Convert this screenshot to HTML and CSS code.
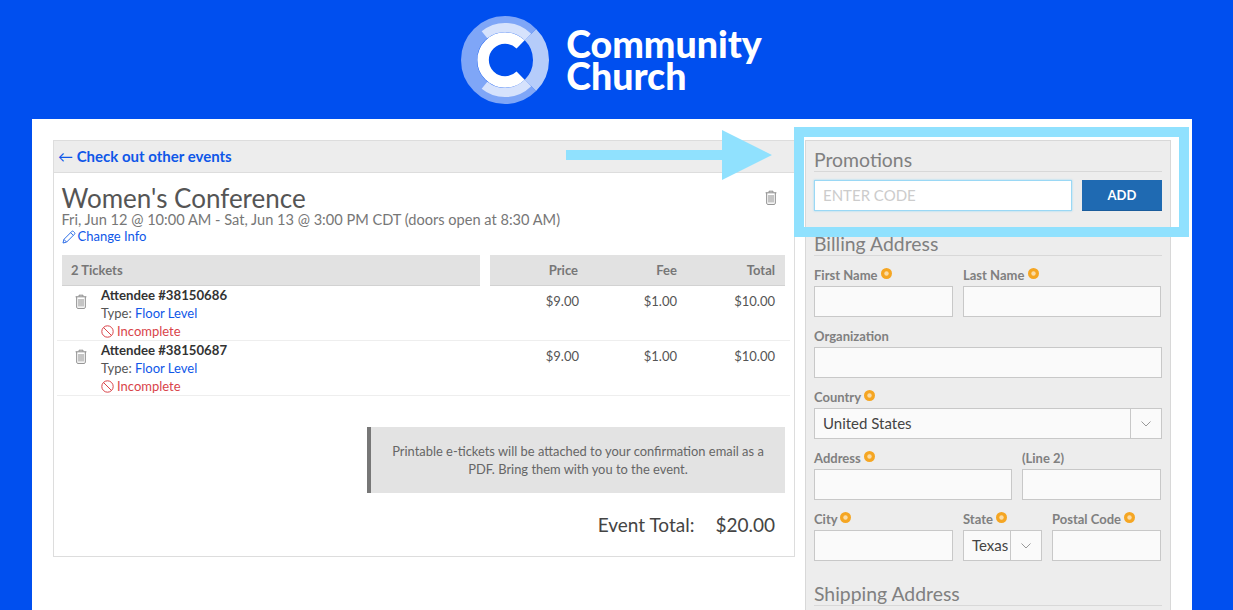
FILE: index.html
```html
<!DOCTYPE html>
<html lang="en">
<head>
    <meta charset="UTF-8">
    <title>Community Church - Checkout</title>
    <link rel="stylesheet" href="styles.css">
</head>
<body>
    <svg width="0" height="0" class="defs">
        <symbol id="trash" viewBox="0 0 12 15">
            <path d="M4 2.500V1.200h4v1.300M.6 2.800h10.800M1.700 2.800v10.400c0 .7.4 1.200 1 1.200h6.600c.6 0 1-.5 1-1.200V2.800M4 5v7.500M6 5v7.500M8 5v7.500" fill="none" stroke="#8a8a8a" stroke-width="1"/>
        </symbol>
        <symbol id="ban" viewBox="0 0 13 13">
            <circle cx="6.500" cy="6.500" r="5.700" fill="none" stroke="#d9444a" stroke-width="1"/>
            <path d="M2.500 2.500l8 8" stroke="#d9444a" stroke-width="1"/>
        </symbol>
        <symbol id="req" viewBox="0 0 11 11">
            <circle cx="5.500" cy="5.500" r="5.500" fill="#f5a623"/>
            <circle cx="5.500" cy="5.500" r="2.200" fill="#fbdca6"/>
        </symbol>
        <symbol id="chev" viewBox="0 0 10 6">
            <path d="M.5.500L5 5l4.500-4.500" fill="none" stroke="#999" stroke-width="1"/>
        </symbol>
    </svg>

    <header class="site-head">
        <svg class="logo" viewBox="-50 -50 100 100" width="100" height="100">
            <path d="M25.460 -25.460A36 36 0 1 0 25.460 25.460" fill="none" stroke="#7fa6f7" stroke-width="16"/>
            <path d="M25.460 -25.460A36 36 0 0 1 25.460 25.460" fill="none" stroke="#b5ccfa" stroke-width="16"/>
            <path d="M-20.500 -25.200A32.500 32.500 0 0 1 23 -23M-20.500 25.200A32.500 32.500 0 0 0 23 23" fill="none" stroke="#d6e2fc" stroke-width="9"/>
            <path d="M15.600 -15.600A22 22 0 1 0 15.600 15.600" fill="none" stroke="#fff" stroke-width="11.500"/>
        </svg>
        <div class="brand">Community<br>Church</div>
    </header>

    <div class="page">
        <main class="event-card">
            <div class="back-bar"><a href="#"><span class="arr">&larr;</span> Check out other events</a></div>
            <div class="event-info">
                <svg class="ico-trash info-trash"><use href="#trash"/></svg>
                <h1>Women's Conference</h1>
                <p class="when">Fri, Jun 12 @ 10:00 AM - Sat, Jun 13 @ 3:00 PM CDT (doors open at 8:30 AM)</p>
                <a class="change" href="#">
                    <svg width="14" height="14" viewBox="0 0 14 14"><path d="M1 13l.9-3.600L9.800 1.500a1.200 1.200 0 0 1 1.700 0l1 1a1.200 1.200 0 0 1 0 1.700L4.600 12.100zM1.900 9.400l2.700 2.700M8.600 2.700l2.700 2.700" fill="none" stroke="#2f6fe8" stroke-width="1"/></svg>
                    Change Info
                </a>
            </div>

            <div class="ticket-head">
                <div class="th-left">2 Tickets</div>
                <div class="th-right"><span>Price</span><span>Fee</span><span>Total</span></div>
            </div>
            <div class="ticket">
                <svg class="ico-trash"><use href="#trash"/></svg>
                <div class="who">
                    <strong>Attendee #38150686</strong>
                    <div>Type: <a href="#">Floor Level</a></div>
                    <div class="bad"><svg><use href="#ban"/></svg>Incomplete</div>
                </div>
                <span class="amt">$9.00</span><span class="amt">$1.00</span><span class="amt">$10.00</span>
            </div>
            <div class="ticket">
                <svg class="ico-trash"><use href="#trash"/></svg>
                <div class="who">
                    <strong>Attendee #38150687</strong>
                    <div>Type: <a href="#">Floor Level</a></div>
                    <div class="bad"><svg><use href="#ban"/></svg>Incomplete</div>
                </div>
                <span class="amt">$9.00</span><span class="amt">$1.00</span><span class="amt">$10.00</span>
            </div>

            <div class="notice">Printable e-tickets will be attached to your confirmation email as a PDF. Bring them with you to the event.</div>
            <div class="total"><span>Event Total:</span><span>$20.00</span></div>
        </main>

        <aside class="side">
            <h2>Promotions</h2>
            <div class="promo">
                <input class="code" type="text" placeholder="ENTER CODE">
                <button class="add">ADD</button>
            </div>

            <h2 class="billing">Billing Address</h2>
            <div class="row">
                <label class="w139"><span class="lbl">First Name <svg class="req"><use href="#req"/></svg></span><span class="box"></span></label>
                <label class="w198"><span class="lbl">Last Name <svg class="req"><use href="#req"/></svg></span><span class="box"></span></label>
            </div>
            <div class="row">
                <label class="wfull"><span class="lbl">Organization</span><span class="box"></span></label>
            </div>
            <div class="row">
                <label class="wfull"><span class="lbl">Country <svg class="req"><use href="#req"/></svg></span>
                    <span class="box sel"><span class="val">United States</span><span class="drop"><svg><use href="#chev"/></svg></span></span>
                </label>
            </div>
            <div class="row">
                <label class="w198"><span class="lbl">Address <svg class="req"><use href="#req"/></svg></span><span class="box"></span></label>
                <label class="w139"><span class="lbl">(Line 2)</span><span class="box"></span></label>
            </div>
            <div class="row">
                <label class="w139"><span class="lbl">City <svg class="req"><use href="#req"/></svg></span><span class="box"></span></label>
                <label class="w79"><span class="lbl">State <svg class="req"><use href="#req"/></svg></span>
                    <span class="box sel"><span class="val">Texas</span><span class="drop"><svg><use href="#chev"/></svg></span></span>
                </label>
                <label class="w109"><span class="lbl">Postal Code <svg class="req"><use href="#req"/></svg></span><span class="box"></span></label>
            </div>
            <h2 class="shipping">Shipping Address</h2>
        </aside>

        <!-- annotation drawn over the screenshot -->
        <svg class="arrow" width="206" height="50" viewBox="0 0 206 50"><path d="M0 20h156V0l50 25-50 25V30H0z" fill="#90e1fe"/></svg>
        <div class="callout"></div>
    </div>
</body>
</html>
```

FILE: styles.css
```css
* {
    box-sizing: border-box;
}

html, body {
    margin: 0;
    height: 610px;
    overflow: hidden;
}

body {
    background-color: #004fef;
    font-family: 'Lato', sans-serif;
    font-size: 13px;
    color: #555;
}

a {
    color: #0f57e8;
    text-decoration: none;
}

.defs {
    display: block;
    height: 0;
}

.site-head {
    height: 119px;
    display: flex;
    justify-content: center;
    align-items: center;
    gap: 11px;
    padding-right: 16px;
}

.logo {
    margin-top: 1px;
}

.brand {
    font-size: 37.5px;
    font-weight: 900;
    line-height: 32px;
    color: #fff;
    margin-top: 1px;
}

.page {
    position: relative;
    margin-left: 32px;
    width: 1160px;
    height: 491px;
    background: #fff;
    padding: 21px;
    display: flex;
    align-items: flex-start;
    gap: 10px;
}

/* left column */
.event-card {
    width: 742px;
    height: 417px;
    border: 1px solid #ddd;
}

.back-bar {
    height: 32px;
    background: #ededed;
    border-bottom: 1px solid #ddd;
    padding: 5px 4px;
    font-size: 15px;
    font-weight: 700;
    line-height: 20px;
}

.arr {
    font-weight: 400;
}

.event-info {
    position: relative;
    padding: 10px 7.5px 0;
    height: 82px;
}

.event-info h1 {
    margin: 0 0 -2px;
    font-size: 26px;
    font-weight: 400;
    line-height: 30px;
    color: #555;
}

.when {
    margin: 0;
    font-size: 14.6px;
    line-height: 17px;
    color: #777;
}

.change {
    display: flex;
    align-items: center;
    gap: 2px;
    font-size: 13px;
    line-height: 17px;
}

.ico-trash {
    width: 12px;
    height: 15px;
}

.info-trash {
    position: absolute;
    right: 17px;
    top: 17px;
}

.ticket-head {
    display: flex;
    gap: 10px;
    margin: 0 9px 0 8px;
    font-weight: 700;
    color: #777;
    line-height: 30px;
}

.th-left, .th-right {
    height: 31px;
    background: #e2e2e2;
    border-bottom: 1px solid #d2d2d2;
}

.th-left {
    width: 418px;
    padding-left: 9px;
}

.th-right {
    width: 295px;
    display: grid;
    grid-template-columns: 88px 99px 98px;
}

.th-right span {
    text-align: right;
}

.ticket {
    display: grid;
    grid-template-columns: 18px 398px 88px 98px 98px;
    margin: 0 4px 0 3px;
    padding-left: 18px;
    height: 55px;
    border-bottom: 1px solid #eee;
    line-height: 18px;
}

.ticket .ico-trash {
    margin-top: 8px;
}

.who {
    padding-left: 8px;
    color: #555;
}

.who strong {
    color: #333;
    font-size: 13.2px;
}

.bad {
    color: #d9444a;
    display: flex;
    align-items: center;
    gap: 3px;
}

.bad svg {
    width: 13px;
    height: 13px;
}

.amt {
    text-align: right;
    padding-top: 6px;
}

.notice {
    width: 418px;
    height: 66px;
    margin: 31px 9px 0 auto;
    padding: 15px 16px;
    background: #e3e3e3;
    border-left: 4px solid #777;
    text-align: center;
    line-height: 18px;
    font-size: 12.9px;
    color: #666;
}

.total {
    display: flex;
    justify-content: flex-end;
    gap: 21px;
    margin-top: 20px;
    padding-right: 19px;
    font-size: 19px;
    color: #444;
    line-height: 24px;
}

/* right column */
.side {
    width: 366px;
    height: 500px;
    background: #ededed;
    border: 1px solid #d8d8d8;
    padding: 8px 8px 0;
}

.side h2 {
    margin: 0;
    height: 23px;
    font-size: 19.4px;
    font-weight: 400;
    line-height: 22px;
    color: #808080;
    border-bottom: 1px solid #d8d8d8;
}

.promo {
    display: flex;
    gap: 10px;
    margin-top: 8px;
}

.code {
    width: 258px;
    height: 31px;
    border: 1px solid #9ad8f5;
    box-shadow: 0 0 2px #9ad8f5;
    background: #fff;
    padding: 0 8px 2px;
    font-family: 'Lato', sans-serif;
    font-size: 15px;
}

.code::placeholder {
    color: #ccc;
}

.add {
    width: 80px;
    height: 31px;
    background: #1f6ab2;
    border: 0;
    border-bottom: 1px solid #1a5c9c;
    color: #fff;
    font-family: 'Lato', sans-serif;
    font-size: 13px;
    font-weight: 700;
}

.side .billing {
    margin-top: 22px;
}

.row {
    display: flex;
    gap: 10px;
    margin-top: 11px;
}

.row label {
    display: block;
    font-weight: 700;
    color: #808080;
    white-space: nowrap;
}

.lbl {
    display: block;
    height: 14px;
    line-height: 16px;
}

.w139 { width: 139px; }
.w198 { width: 198px; }
.w79 { width: 79px; }
.w109 { width: 109px; }
.wfull { width: 348px; }

.req {
    width: 11px;
    height: 11px;
    vertical-align: 1px;
}

.box {
    display: flex;
    height: 31px;
    margin-top: 5px;
    background: #fafafa;
    border: 1px solid #c8c8c8;
    font-weight: 400;
}

.val {
    flex: 1;
    padding-left: 8px;
    line-height: 29px;
    font-size: 15px;
    color: #444;
    overflow: hidden;
}

.drop {
    width: 31px;
    border-left: 1px solid #c8c8c8;
    display: flex;
    align-items: center;
    justify-content: center;
}

.drop svg {
    width: 10px;
    height: 6px;
}

.side .shipping {
    margin-top: 22px;
}

/* annotation */
.arrow {
    position: absolute;
    left: 534px;
    top: 11px;
}

.callout {
    position: absolute;
    left: 762px;
    top: 8px;
    width: 395px;
    height: 110px;
    border: 10px solid #90e1fe;
}
```
